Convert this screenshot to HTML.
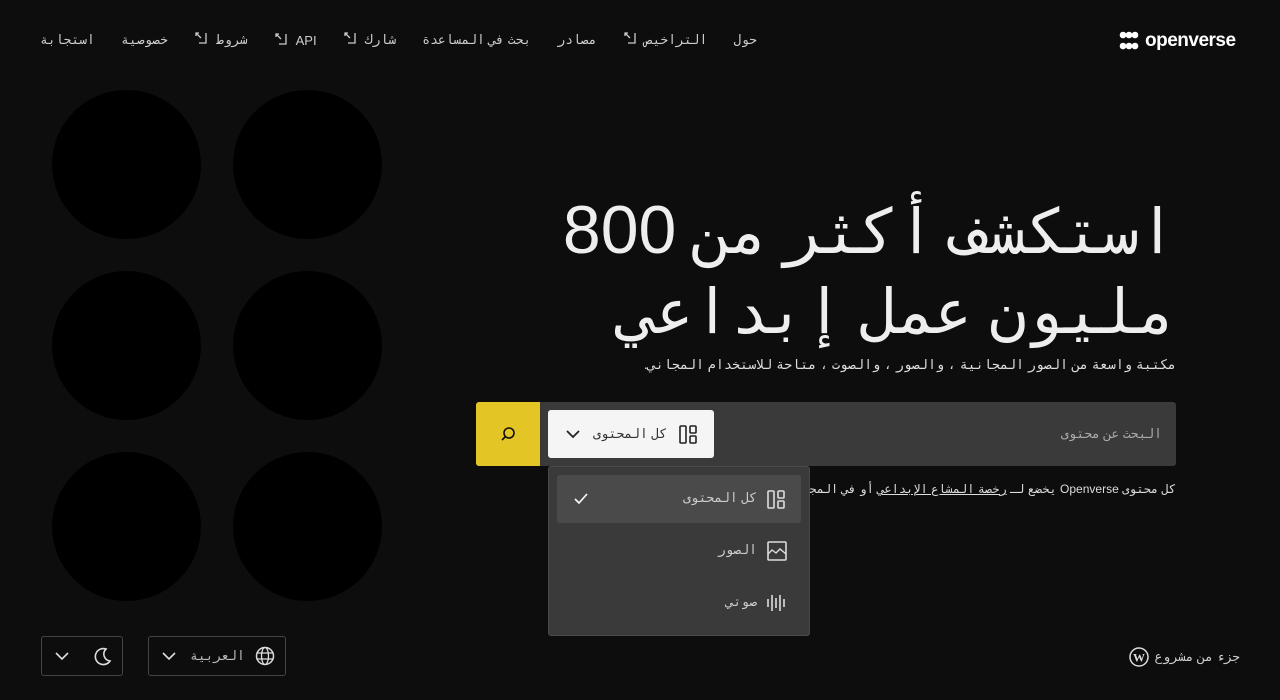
<!DOCTYPE html>
<html><head><meta charset="utf-8"><style>
*{margin:0;padding:0;box-sizing:border-box}
body{width:1280px;height:700px;background:#0d0d0d;color:#ddd;font-family:"Liberation Sans","DejaVu Sans Mono",monospace;position:relative;overflow:hidden}
.a{position:absolute}
.nav{top:31px;font-size:13px;color:#ccc;white-space:nowrap}
.c{position:absolute;width:149px;height:149px;border-radius:50%;background:#000}
svg{display:block}
.ic{display:inline-block;vertical-align:-1px;margin-right:8px}
</style></head><body>
<div class="a nav" style="left:40px;width:717px;direction:rtl;display:flex;justify-content:space-between;align-items:center">
<span>حول</span><span>التراخيص<svg class="ic" width="14" height="14"><path d="M2 5V2h3M2 2l5 5M5 12h7V2" fill="none" stroke="#ccc" stroke-width="1.3"/></svg></span><span>مصادر</span><span>بحث في المساعدة</span><span>شارك<svg class="ic" width="14" height="14"><path d="M2 5V2h3M2 2l5 5M5 12h7V2" fill="none" stroke="#ccc" stroke-width="1.3"/></svg></span><span>API<svg class="ic" width="14" height="14"><path d="M2 5V2h3M2 2l5 5M5 12h7V2" fill="none" stroke="#ccc" stroke-width="1.3"/></svg></span><span>شروط<svg class="ic" width="14" height="14"><path d="M2 5V2h3M2 2l5 5M5 12h7V2" fill="none" stroke="#ccc" stroke-width="1.3"/></svg></span><span>خصوصية</span><span>استجابة</span>
</div>
<div class="a" style="left:1119px;top:30px;display:flex;align-items:center;gap:6px">
<svg width="20" height="20"><circle cx="4" cy="4" r="3.3" fill="#fff"/><circle cx="10" cy="4" r="3.3" fill="#fff"/><circle cx="16" cy="4" r="3.3" fill="#fff"/><circle cx="4" cy="15" r="3.3" fill="#fff"/><circle cx="10" cy="15" r="3.3" fill="#fff"/><circle cx="16" cy="15" r="3.3" fill="#fff"/></svg>
<span style="font-weight:bold;font-size:19px;color:#fff;letter-spacing:-0.5px">openverse</span></div>
<div class="c" style="left:52px;top:90px"></div><div class="c" style="left:233px;top:90px"></div>
<div class="c" style="left:52px;top:271px"></div><div class="c" style="left:233px;top:271px"></div>
<div class="c" style="left:52px;top:452px"></div><div class="c" style="left:233px;top:452px"></div>
<div class="a" style="right:104px;top:190px;width:760px;text-align:right;direction:rtl;font-size:62px;line-height:80px;color:#eee;white-space:nowrap">استكشف أكثر من <span style="font-size:68px">800</span><br>مليون عمل إبداعي</div>
<div class="a" style="right:104px;top:357px;direction:rtl;font-size:13.4px;color:#ddd;white-space:nowrap">مكتبة واسعة من الصور المجانية ، والصور ، والصوت ، متاحة للاستخدام المجاني.</div>
<div class="a" style="left:476px;top:402px;width:700px;height:64px;background:#3a3a3a;border-radius:3px"></div>
<div class="a" style="left:476px;top:402px;width:64px;height:64px;background:#e4c526;border-radius:3px 0 0 3px"><svg width="64" height="64"><circle cx="33" cy="31" r="5" fill="none" stroke="#111" stroke-width="1.6"/><line x1="29.5" y1="34.5" x2="26" y2="38" stroke="#111" stroke-width="1.6"/></svg></div>
<div class="a" style="right:118px;top:426px;font-size:13px;color:#aaa;direction:rtl">البحث عن محتوى</div>
<div class="a" style="left:548px;top:410px;width:166px;height:48px;background:#f5f5f5;border-radius:3px"></div>
<svg class="a" style="left:565px;top:428px" width="16" height="12"><path d="M2 3l6 6 6-6" fill="none" stroke="#222" stroke-width="1.8"/></svg>
<div class="a" style="left:593px;top:426px;font-size:13px;color:#333;direction:rtl">كل المحتوى</div>
<svg class="a" style="left:679px;top:425px" width="20" height="20"><rect x="1" y="1" width="6" height="17" rx="1" fill="none" stroke="#222" stroke-width="1.6"/><rect x="11" y="1" width="6" height="7" rx="1" fill="none" stroke="#222" stroke-width="1.6"/><rect x="11" y="11" width="6" height="7" rx="1" fill="none" stroke="#222" stroke-width="1.6"/></svg>
<div class="a" style="right:104px;top:482px;direction:rtl;font-size:12px;color:#ddd;white-space:nowrap">كل محتوى Openverse يخضع لـ <u>رخصة المشاع الإبداعي</u> أو في المجال العام.</div>
<div class="a" style="left:548px;top:466px;width:262px;height:170px;background:#3a3a3a;border:1px solid #4a4a4a;border-radius:3px"></div>
<div class="a" style="left:557px;top:475px;width:244px;height:48px;background:#4a4a4a;border-radius:3px"></div>
<svg class="a" style="left:573px;top:492px" width="16" height="14"><path d="M2 7l4 4 8-9" fill="none" stroke="#fff" stroke-width="1.6"/></svg>
<div class="a" style="right:523px;top:490px;font-size:13px;color:#ccc;direction:rtl">كل المحتوى</div>
<svg class="a" style="left:767px;top:490px" width="20" height="20"><rect x="1" y="1" width="6" height="17" rx="1" fill="none" stroke="#ddd" stroke-width="1.6"/><rect x="11" y="1" width="6" height="7" rx="1" fill="none" stroke="#ddd" stroke-width="1.6"/><rect x="11" y="11" width="6" height="7" rx="1" fill="none" stroke="#ddd" stroke-width="1.6"/></svg>
<div class="a" style="right:523px;top:542px;font-size:13px;color:#ccc;direction:rtl">الصور</div>
<svg class="a" style="left:767px;top:541px" width="20" height="20"><rect x="1" y="1" width="18" height="18" rx="1" fill="none" stroke="#ddd" stroke-width="1.6"/><path d="M1 13l4-4 4 3 4-4 6 5" fill="none" stroke="#ddd" stroke-width="1.4"/></svg>
<div class="a" style="right:523px;top:594px;font-size:13px;color:#ccc;direction:rtl">صوتي</div>
<svg class="a" style="left:767px;top:593px" width="20" height="20"><path d="M1 6v8M5 2v16M9 5v10M13 2v16M17 6v8" stroke="#ddd" stroke-width="1.6"/></svg>
<div class="a" style="left:41px;top:636px;width:82px;height:40px;border:1px solid #444;border-radius:3px"></div>
<svg class="a" style="left:54px;top:650px" width="16" height="12"><path d="M2 3l6 6 6-6" fill="none" stroke="#ddd" stroke-width="1.6"/></svg>
<svg class="a" style="left:92px;top:646px" width="20" height="20"><path d="M14 3a8 8 0 1 0 4 12A7 7 0 0 1 14 3z" fill="none" stroke="#ddd" stroke-width="1.6"/></svg>
<div class="a" style="left:148px;top:636px;width:138px;height:40px;border:1px solid #444;border-radius:3px"></div>
<svg class="a" style="left:161px;top:650px" width="16" height="12"><path d="M2 3l6 6 6-6" fill="none" stroke="#ddd" stroke-width="1.6"/></svg>
<div class="a" style="left:190px;top:648px;font-size:13px;color:#bbb;direction:rtl">العربية</div>
<svg class="a" style="left:255px;top:646px" width="20" height="20"><circle cx="10" cy="10" r="8.5" fill="none" stroke="#ddd" stroke-width="1.5"/><ellipse cx="10" cy="10" rx="3.5" ry="8.5" fill="none" stroke="#ddd" stroke-width="1.3"/><path d="M2 7h16M2 13h16" stroke="#ddd" stroke-width="1.3"/></svg>
<div class="a" style="right:40px;top:647px;font-size:13px;color:#ccc;display:flex;gap:6px;direction:rtl;align-items:center"><span>جزء من مشروع</span><svg width="20" height="20"><circle cx="10" cy="10" r="9" fill="none" stroke="#ddd" stroke-width="1.5"/><text x="10" y="14.5" font-size="12" font-weight="bold" text-anchor="middle" fill="#ddd" font-family="Liberation Serif">W</text></svg></div>
</body></html>
